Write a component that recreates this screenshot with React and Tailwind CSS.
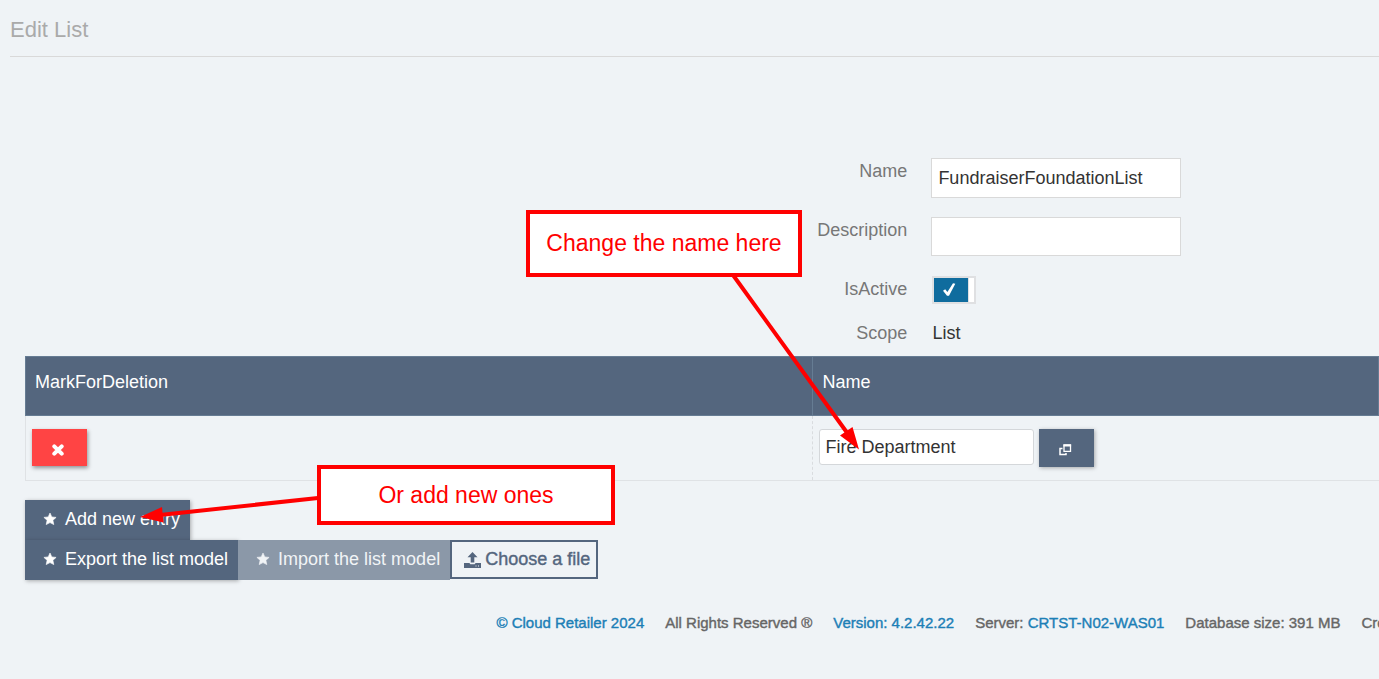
import React from "react";

const IconStar = () => (
  <svg width="14" height="14" viewBox="0 0 14 14" fill="currentColor" stroke="currentColor" strokeLinejoin="round" aria-hidden="true">
    <path d="M7 1l1.800 3.900 4.300.5-3.200 2.900.9 4.300L7 10.600l-3.800 2 .9-4.300L.9 5.400l4.300-.5z" strokeWidth=".6" />
  </svg>
);

const IconRemove = () => (
  <svg width="12" height="12" viewBox="0 0 12 12" fill="none" stroke="currentColor" strokeWidth="4" strokeLinecap="round" aria-hidden="true">
    <path d="M2.300 2.300l7.400 7.400M9.700 2.300l-7.400 7.400" />
  </svg>
);

const IconRestore = () => (
  <svg width="13" height="12" viewBox="0 0 13 12" fill="none" stroke="currentColor" aria-hidden="true">
    <path d="M5 1v6.300h6.500V1z" strokeWidth="1.300" />
    <path d="M4.400 1.500h7.700" strokeWidth="2" />
    <path d="M3.500 4.500H1v6h6V9" strokeWidth="1.500" />
  </svg>
);

const IconCheck = () => (
  <svg width="13" height="14" viewBox="0 0 13 14" fill="currentColor" aria-hidden="true">
    <path d="M0 7.800l2.200-1.500 2.200 2.600L10 .3l2.300.5L6 12.700H4z" />
  </svg>
);

const IconUpload = () => (
  <svg width="17" height="16" viewBox="0 0 17 16" fill="currentColor" aria-hidden="true">
    <path d="M8.500 0l5 5.200h-3.200v5.300H6.700V5.200H3.500z" />
    <path
      fillRule="evenodd"
      d="M0 11h5.400l1 1.200h4.200l1-1.200H17v5H0zM11.500 13.500v1h1v-1zM14 13.500v1h1v-1z"
    />
  </svg>
);

const links = "text-[#1c7fb6]";
const button = "flex h-10 items-center gap-2 pb-0.5 pl-[18px] pr-[10px]";
const darkButton = "bg-[#54667e] text-white shadow-[1px_1px_4px_rgba(0,0,0,0.3)]";

const Field = ({ label, id, children }) => (
  <div className="flex items-start gap-6">
    <label htmlFor={id} className="w-[65.8%] shrink-0 text-right leading-[26px] text-[#777]">
      {label}
    </label>
    {children}
  </div>
);

const Note = ({ className, children }) => (
  <div
    className={`absolute flex items-center justify-center border-4 border-[#f00] bg-white text-[23px] whitespace-nowrap text-[#f00] ${className}`}
  >
    {children}
  </div>
);

const App = () => {
  return (
    <div className="relative min-h-screen overflow-hidden bg-[#eff3f6] font-['Liberation_Sans',Arial,sans-serif] text-[18px] text-[#333]">
      <header className="ml-[10px] border-b border-[#d9d9d9] pt-4 pb-3">
        <h1 className="text-[22px] leading-7 text-[#aaa]">Edit List</h1>
      </header>

      {/* List settings */}
      <form className="pt-[101px]">
        <Field label="Name" id="name">
          <input
            id="name"
            defaultValue="FundraiserFoundationList"
            className="mb-[19px] h-10 w-[250px] border border-[#d9d9d9] bg-white px-[6px]"
          />
        </Field>
        <Field label="Description" id="description">
          <input
            id="description"
            className="mb-5 h-[39px] w-[250px] border border-[#d9d9d9] bg-white px-[6px]"
          />
        </Field>
        <Field label="IsActive" id="active">
          <div className="relative mb-[14px] ml-px flex h-7 w-11 border-2 border-[#dfe0e2] bg-white">
            <input
              id="active"
              type="checkbox"
              defaultChecked
              className="absolute inset-0 cursor-pointer appearance-none"
            />
            <span className="flex w-[35px] items-center justify-center border-r border-[#dfe0e2] bg-[#0f6c9e] pr-1 text-white">
              <IconCheck />
            </span>
          </div>
        </Field>
        <div className="mb-2 flex items-start gap-[25px] leading-[30px]">
          <span className="w-[65.8%] shrink-0 text-right text-[#777]">Scope</span>
          <span>List</span>
        </div>
      </form>

      {/* Entries */}
      <div className="pl-[25px]">
        <table className="w-full table-fixed border-collapse text-left">
          <thead>
            <tr className="h-[59px] border border-[#667c93] bg-[#54667e] align-top text-white">
              <th className="w-[58.2%] border-r border-[#667c93] px-[9px] pt-3 font-normal">
                MarkForDeletion
              </th>
              <th className="px-[9px] pt-3 font-normal">Name</th>
            </tr>
          </thead>
          <tbody>
            <tr className="h-[65px] border-b border-l border-[#dfe2e5] align-top">
              <td className="border-r border-dashed border-[#d9dcdf] px-[6px] pt-[13px]">
                <button
                  type="button"
                  aria-label="Delete"
                  className="flex h-[37px] w-[55px] items-center bg-[#ff4444] pt-1 pl-5 text-white shadow-[1px_2px_4px_rgba(0,0,0,0.4)]"
                >
                  <IconRemove />
                </button>
              </td>
              <td className="px-[6px] pt-[13px]">
                <div className="flex gap-[5px]">
                  <input
                    aria-label="Entry name"
                    defaultValue="Fire Department"
                    className="h-9 w-[215px] rounded-[3px] border border-[#d4d7da] bg-white px-[5px]"
                  />
                  <button
                    type="button"
                    aria-label="Open"
                    className={`flex h-[38px] w-[55px] items-center pt-[3px] pl-5 ${darkButton}`}
                  >
                    <IconRestore />
                  </button>
                </div>
              </td>
            </tr>
          </tbody>
        </table>

        <div className="flex pt-[19px]">
          <button type="button" className={`${button} ${darkButton}`}>
            <IconStar />
            Add new entry
          </button>
        </div>
        <div className="flex">
          <button type="button" className={`${button} ${darkButton}`}>
            <IconStar />
            Export the list model
          </button>
          <button type="button" disabled className={`${button} bg-[#8b98a8] text-[#f1f4f6]`}>
            <IconStar />
            Import the list model
          </button>
          <button
            type="button"
            className="flex h-[39px] items-center gap-1 border-2 border-[#54667e] pr-[6px] pl-3 text-[#54667e] [-webkit-text-stroke:0.4px_#54667e]"
          >
            <IconUpload />
            Choose a file
          </button>
        </div>
      </div>

      <footer className="flex gap-[21px] pt-8 pl-[36%] text-[15px] leading-[22px] whitespace-nowrap text-[#666] [-webkit-text-stroke:0.4px]">
        <a href="#" className={links}>© Cloud Retailer 2024</a>
        <span>All Rights Reserved ®</span>
        <a href="#" className={links}>Version: 4.2.42.22</a>
        <span>
          Server: <a href="#" className={links}>CRTST-N02-WAS01</a>
        </span>
        <span>Database size: 391 MB</span>
        <span>Cre</span>
      </footer>

      {/* Callouts over the page */}
      <svg
        className="pointer-events-none absolute top-0 left-0"
        width="1379"
        height="679"
        viewBox="0 0 1379 679"
        stroke="#f00"
        fill="#f00"
        aria-hidden="true"
      >
        <path d="M733 275L848 434M318 498L160 515" strokeWidth="4" />
        <path d="M859 449.500L840 435.500L852.500 427zM140 517L162 507L163.500 522.500z" stroke="none" />
      </svg>
      <Note className="top-[210px] left-[526px] h-[67px] w-[276px]">Change the name here</Note>
      <Note className="top-[465px] left-[317px] h-[60px] w-[298px]">Or add new ones</Note>
    </div>
  );
};

export default App;
